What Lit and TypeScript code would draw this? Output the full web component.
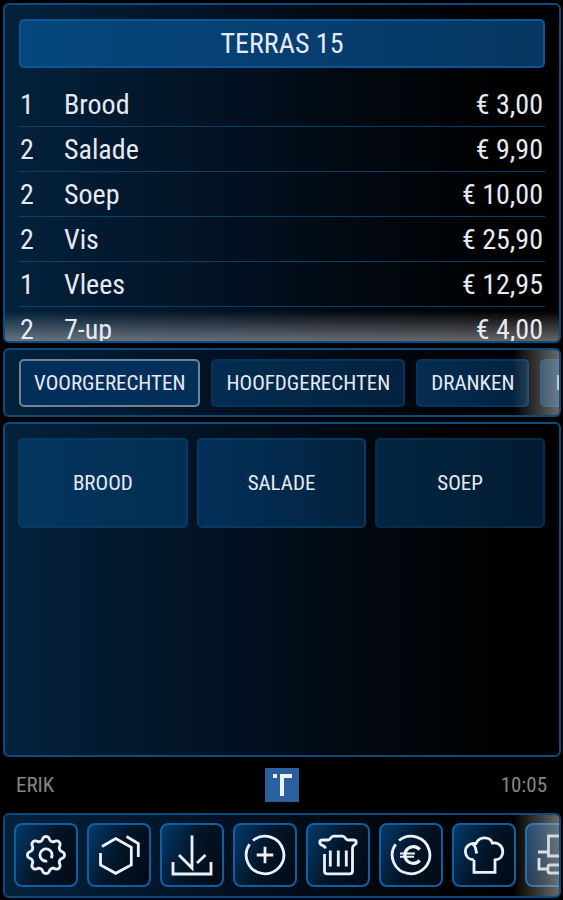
import { LitElement, html, css, svg } from "lit";
import { customElement, state } from "lit/decorators.js";
import { classMap } from "lit/directives/class-map.js";

interface OrderLine {
  count: number;
  name: string;
  price: string;
}

const lines: OrderLine[] = [
  { count: 1, name: "Brood", price: "€ 3,00" },
  { count: 2, name: "Salade", price: "€ 9,90" },
  { count: 2, name: "Soep", price: "€ 10,00" },
  { count: 2, name: "Vis", price: "€ 25,90" },
  { count: 1, name: "Vlees", price: "€ 12,95" },
  { count: 2, name: "7-up", price: "€ 4,00" },
];

const categories = ["VOORGERECHTEN", "HOOFDGERECHTEN", "DRANKEN", "IJS"];
const products = ["BROOD", "SALADE", "SOEP"];

// Outline of a cog with eight rounded teeth, centred on the origin.
function cogPath(): string {
  const points: string[] = [];
  for (let i = 0; i < 160; i++) {
    const a = (i / 160) * Math.PI * 2;
    const wave = Math.tanh(1.2 * Math.cos(8 * a)) / Math.tanh(1.2);
    const r = 16.6 + 1.9 * wave;
    points.push(`${(r * Math.sin(a)).toFixed(2)} ${(-r * Math.cos(a)).toFixed(2)}`);
  }
  return `M${points.join("L")}Z`;
}

const ring = "M-12 -14.5A18.8 18.8 0 1 1 -15.4 -10.8";

const tools = [
  { label: "Instellingen", shape: svg`<path d=${cogPath()} /><path d="M1.2 6A6.1 6.1 0 1 1 5.2 3.2" />` },
  {
    label: "Producten",
    shape: svg`<path d="M-17 -8.5L-3.3 -16.5L12.3 -7.8V10L-3.3 18.3L-18.5 10V-2" /><path d="M7.5 -18.5L19.3 -11.5V2" />`,
  },
  {
    label: "Opslaan",
    shape: svg`<path d="M0 -19.5V13L-13 0M13.5 0L5 8M-19 7V19H19V7" />`,
  },
  { label: "Toevoegen", shape: svg`<path d=${ring} /><path d="M-8.3 0H8.3M0 -8.3V8.3" />` },
  {
    label: "Verwijderen",
    shape: svg`<path d="M-12.5 -6.5C-13 -9 -14.5 -9 -16 -9.8C-19.4 -11.5 -18.6 -15 -15.5 -15H-10C-7 -15 -7.5 -18.8 -4.5 -18.8H4.5C7.5 -18.8 7 -15 10 -15H15.5C18.6 -15 19.4 -11.5 16 -9.8C14.8 -9.2 14.5 -8 14.5 -6.5V16Q14.5 18.8 11.7 18.8H-10.7Q-13.5 18.8 -13.5 16V-1M-7.7 -4.5V11.5M0.3 -4.5V11.5M8.3 -4.5V11.5" />`,
  },
  {
    label: "Betalen",
    shape: svg`<path d=${ring} /><path stroke-width="3.2" d="M8.7 -5.4A8.4 8.4 0 1 0 8.7 5.4" /><path stroke-width="2" d="M-11 -1.6H4M-11 1.8H3" />`,
  },
  {
    label: "Keuken",
    shape: svg`<path d="M-10 5C-16 4.5 -18.6 0.5 -18.6 -3.5C-18.6 -9 -13.5 -12.5 -8 -11.5C-5 -19 6 -19 8.5 -11.8C14 -13 18.8 -9 18.8 -3.5C18.8 0.5 16.5 4.5 11 5V17.3H-10V5M-11.5 -11C-8 -9.5 -8.3 -5 -7.3 -1.5" />`,
  },
  {
    label: "Printer",
    shape: svg`<path d="M-8.5 -19H12V1H-8.5ZM-19 -3H-9M-18 3V14H-9M-7 10H12V18H-7Q-9 18 -9 16V12Q-9 10 -7 10" />`,
  },
];

@customElement("app-root")
export class AppRoot extends LitElement {
  @state() private active = 0;

  static styles = css`
    :host {
      display: flex;
      flex-direction: column;
      box-sizing: border-box;
      height: 100vh;
      padding: 3px 2px 2px 3px;
      background: #000;
      color: #e6eaf2;
      font-family: "Roboto Condensed", Roboto, sans-serif;
      --line: #0a4b80;
    }
    * {
      box-sizing: border-box;
    }
    button {
      font: inherit;
      color: inherit;
      margin: 0;
      padding: 0;
      cursor: pointer;
    }
    .panel {
      position: relative;
      border: 2px solid var(--line);
      border-radius: 6px;
      background: linear-gradient(90deg, #03223b, #021326 35%, #01080f 65%, #000 92%);
      overflow: hidden;
    }
    .order {
      flex: 340 1 0;
      min-height: 0;
      padding: 14px 14px 0;
      margin-bottom: 5px;
    }
    .title {
      margin: 0 0 14px;
      border: 2px solid #0b559a;
      border-radius: 5px;
      background: linear-gradient(90deg, #06487c, #063f72 50%, #05375f);
      font-size: 28px;
      font-weight: 400;
      line-height: 45px;
      text-align: center;
    }
    .lines {
      position: relative;
      z-index: 1;
      width: 100%;
      border-collapse: separate;
      border-spacing: 0;
      font-size: 28px;
      line-height: 43px;
    }
    .lines td {
      padding: 1px 0 0;
      border-bottom: 1px solid #0b4069;
    }
    .lines .count {
      width: 45px;
      padding-left: 1px;
    }
    .lines .price {
      text-align: right;
      padding-right: 2px;
    }
    .fade-down::after {
      content: "";
      position: absolute;
      inset: auto 0 0 0;
      height: 30px;
      background: linear-gradient(180deg, transparent, rgba(170, 170, 175, 0.6));
      pointer-events: none;
    }
    .fade-side::after {
      content: "";
      position: absolute;
      inset: 0 0 0 auto;
      width: 46px;
      background: linear-gradient(90deg, transparent, rgba(190, 190, 190, 0.55));
      pointer-events: none;
    }
    .tabs {
      display: flex;
      flex: none;
      gap: 11px;
      padding: 9px 0 8px 14px;
      margin-bottom: 5px;
    }
    .tab {
      flex: none;
      padding: 0 13px;
      border: 2px solid #06355c;
      border-radius: 5px;
      background: linear-gradient(90deg, #042d51, #03223f);
      font-size: 21px;
      line-height: 44px;
    }
    .tab.active {
      border-color: #6f8296;
      background: #03305a;
    }
    .products {
      flex: 335 1 0;
      min-height: 0;
      display: grid;
      grid-template-columns: repeat(3, 1fr);
      align-content: start;
      gap: 9px;
      padding: 14px 14px 0 13px;
    }
    .product {
      height: 90px;
      border: 2px solid #073a61;
      border-radius: 5px;
      background: linear-gradient(90deg, #03365f, #032e52);
      font-size: 21px;
    }
    .product:nth-child(2) {
      background: linear-gradient(90deg, #03305a, #03223d);
    }
    .product:nth-child(3) {
      border-color: #062d4b;
      background: linear-gradient(90deg, #032642, #021b30);
    }
    .status {
      flex: none;
      display: grid;
      grid-template-columns: 1fr auto 1fr;
      align-items: center;
      height: 56px;
      padding: 0 14px 0 13px;
      font-size: 21px;
      color: #85858a;
    }
    .clock {
      text-align: right;
    }
    .logo {
      display: block;
      width: 34px;
      height: 34px;
    }
    .tools {
      flex: none;
      display: flex;
      gap: 9px;
      padding: 8px 0 9px 9px;
    }
    .tool {
      flex: none;
      display: grid;
      place-items: center;
      width: 64px;
      height: 64px;
      border: 2px solid #0f5fa2;
      border-radius: 8px;
      background: linear-gradient(115deg, #043b6d, #021426 50%, #010a14);
    }
    .icon {
      width: 44px;
      height: 44px;
      fill: none;
      stroke: #edf1f7;
      stroke-width: 2.8;
    }
  `;

  render() {
    return html`
      <section class="panel order fade-down">
        <h1 class="title">TERRAS 15</h1>
        <table class="lines">
          <tbody>
            ${lines.map(
              (l) => html`<tr>
                <td class="count">${l.count}</td>
                <td>${l.name}</td>
                <td class="price">${l.price}</td>
              </tr>`,
            )}
          </tbody>
        </table>
      </section>
      <nav class="panel tabs fade-side">
        ${categories.map(
          (c, i) => html`<button
            class=${classMap({ tab: true, active: i === this.active })}
            @click=${() => (this.active = i)}
          >${c}</button>`,
        )}
      </nav>
      <main class="panel products">
        ${products.map((p) => html`<button class="product">${p}</button>`)}
      </main>
      <div class="status">
        <span>ERIK</span>
        <svg class="logo" viewBox="0 0 34 34" aria-hidden="true">
          <rect width="34" height="34" fill="#2c5f9e" />
          <path d="M8 6H12V10H8ZM15 6H27V10H19V28H15Z" fill="#edf1f7" />
        </svg>
        <span class="clock">10:05</span>
      </div>
      <footer class="panel tools fade-side">
        ${tools.map(
          (t) => html`<button class="tool" aria-label=${t.label}>
            <svg class="icon" viewBox="-22 -22 44 44" aria-hidden="true">${t.shape}</svg>
          </button>`,
        )}
      </footer>
    `;
  }
}
